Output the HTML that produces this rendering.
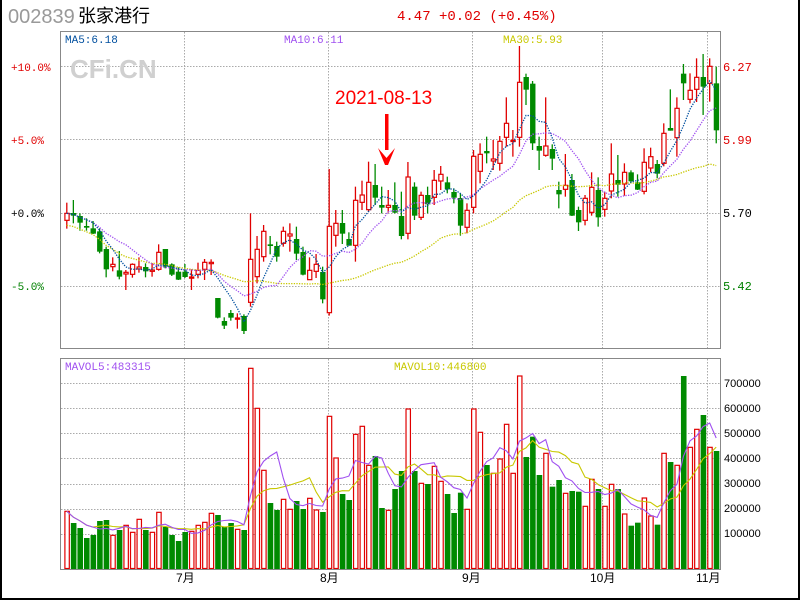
<!DOCTYPE html>
<html><head><meta charset="utf-8"><style>
html,body{margin:0;padding:0;background:#fff;width:800px;height:600px;overflow:hidden}
svg{display:block}
text{font-family:"Liberation Mono","DejaVu Sans Mono",monospace}
text.sans{font-family:"Liberation Sans","Noto Sans CJK SC",sans-serif}
</style></head><body>
<svg id="s" width="800" height="600" xmlns="http://www.w3.org/2000/svg">
<rect x="0" y="0" width="800" height="600" fill="#fff"/>
<rect x="0" y="0" width="2" height="600" fill="#000"/>
<rect x="798" y="0" width="2" height="600" fill="#000"/>
<rect x="0" y="598" width="800" height="2" fill="#000"/>
<text class="sans" x="8" y="23" font-size="20" fill="#999">002839</text>
<text class="sans" x="78" y="22" font-size="18" fill="#000">张家港行</text>
<text x="397" y="20" font-size="14" fill="#e00000">4.47 +0.02 (+0.45%)</text>
<g id="grid" stroke="#aaa" stroke-dasharray="1.5,1.5" stroke-width="1"></g>
<text class="sans" x="70" y="78" font-size="26" font-weight="bold" fill="#d0d0d0">CFi.CN</text>
<g id="g"></g>
<rect x="60.5" y="31.5" width="660" height="317" fill="none" stroke="#888"/>
<rect x="60.5" y="358.5" width="660" height="211" fill="none" stroke="#888"/>
<text x="65" y="43" font-size="11" fill="#004f9f">MA5:6.18</text>
<text x="284" y="43" font-size="11" fill="#a050f0">MA10:6.11</text>
<text x="503" y="43" font-size="11" fill="#c8c800">MA30:5.93</text>
<text x="65" y="370" font-size="11" fill="#a050f0">MAVOL5:483315</text>
<text x="394" y="370" font-size="11" fill="#c8c800">MAVOL10:446800</text>
<text x="11" y="71" font-size="11" fill="#e00000">+10.0%</text>
<text x="11" y="144" font-size="11" fill="#e00000">+5.0%</text>
<text x="11" y="217" font-size="11" fill="#000">+0.0%</text>
<text x="11" y="290" font-size="11" fill="#008000">-5.0%</text>
<text x="723" y="71" font-size="12" fill="#e00000">6.27</text>
<text x="723" y="144" font-size="12" fill="#e00000">5.99</text>
<text x="723" y="217" font-size="12" fill="#000">5.70</text>
<text x="723" y="290" font-size="12" fill="#008000">5.42</text>
<g font-size="11" fill="#000">
<text class="sans" x="724" y="387">700000</text><text class="sans" x="724" y="412">600000</text><text class="sans" x="724" y="437">500000</text>
<text class="sans" x="724" y="462">400000</text><text class="sans" x="724" y="487">300000</text><text class="sans" x="724" y="512">200000</text><text class="sans" x="724" y="537">100000</text>
</g>
<g font-size="12" fill="#000">
<text class="sans" x="176" y="582">7月</text><text class="sans" x="320" y="582">8月</text><text class="sans" x="462" y="582">9月</text><text class="sans" x="590" y="582">10月</text><text class="sans" x="696" y="582">11月</text>
</g>
<text class="sans" x="335" y="104" font-size="19" fill="#ff0000">2021-08-13</text>
<rect x="385" y="114" width="3.5" height="36" fill="#ff0000"/>
<polygon points="378,148 386.5,158 395,148 388,165 385,165" fill="#ff0000"/>
</svg>
<script>
var NS="http://www.w3.org/2000/svg",g=document.getElementById('g'),gr=document.getElementById('grid');
function el(p,t,a){var e=document.createElementNS(NS,t);for(var k in a)e.setAttribute(k,a[k]);p.appendChild(e);return e;}
[184.5,328.5,472.5,602.5,707.5].forEach(function(x){el(gr,'line',{x1:x,y1:32,x2:x,y2:348});el(gr,'line',{x1:x,y1:359,x2:x,y2:569});});
[66.5,139.5,213.5,286.5].forEach(function(y){el(gr,'line',{x1:61,y1:y,x2:720,y2:y});});
[383.5,408.5,433.5,458.5,484.5,509.5,534.5].forEach(function(y){el(gr,'line',{x1:61,y1:y,x2:720,y2:y});});
var A=[['R',190,211,158,236],['G',189,197,150,220],['G',198,218,190,242],['G',228,233,205,242],['G',235,251,213,252],['G',244,305,235,310],['G',297,358,290,382],['R',343,350,322,364],['G',361,380,303,388],['R',367,372,360,420],
['R',343,373,340,383],['R',351,357,322,368],['G',351,364,340,382],['R',360,364,339,380],['R',307,358,283,362],['G',297,350,297,355],['G',343,374,340,378],['G',365,389,352,390],['G',365,381,342,384],['R',381,383,358,420],
['R',361,373,338,385],['R',337,358,327,390],['R',337,341,328,375],['G',444,503,444,505],['G',513,527,502,537],['G',489,503,480,512],['R',504,506,490,536],['G',498,543,493,552],['R',328,457,190,470],['R',298,380,258,400],
['R',244,320,225,335],['G',283,288,258,313],['G',288,320,275,335],['R',244,280,230,290],['R',252,258,220,305],['G',267,311,230,330],['G',306,374,290,376],['R',361,389,322,390],['R',343,364,312,384],['G',366,448,350,460],
['R',229,488,57,497],['R',220,256,180,290],['G',219,251,180,282],['G',267,287,247,287],['R',151,286,110,335],['R',135,157,92,180],['R',97,179,35,186],['G',105,143,42,165],['G',165,173,110,190],['R',166,172,120,188]];
var B=[['G',495,518,427,520],['G',528,588,455,598],['R',411,580,366,598],['G',440,527,427,540],['R',466,532,455,540],['G',465,493,440,520],['R',421,472,390,495],['R',403,423,378,450],['G',427,448,410,460],['G',456,473,445,490],
['G',474,557,460,587],['R',511,562,490,580],['R',349,502,330,520],['R',343,394,310,430],['G',333,340,290,370],['R',357,363,300,390],['R',304,370,288,392],['R',250,292,172,320],['R',301,303,270,350],['R',127,292,18,320],
['G',111,149,101,195],['G',131,310,123,330],['G',318,332,290,390],['R',318,346,172,350],['G',327,356,313,390],['G',450,463,425,505],['R',436,448,342,470],['G',420,527,402,528],['G',510,547,500,573],['R',475,541,465,556],
['R',442,517,397,527],['G',450,532,412,560],['R',475,508,455,530],['R',402,453,310,475],['G',420,434,345,470],['R',397,432,370,467],['G',397,424,391,430],['G',427,449,403,450],['R',367,454,325,463],['R',350,384,323,397],
['G',372,401,360,415],['R',280,370,250,379],['G',264,272,148,272],['R',205,293,172,350],['G',101,130,72,180],['R',151,178,100,190],['R',112,148,55,186],['G',111,140,42,225],['R',79,130,55,185],['G',130,271,80,310]];
var C=[];A.forEach(function(c){C.push([c[0],150+c[1]/3,150+c[2]/3,150+c[3]/3,150+c[4]/3]);});
B.forEach(function(c){C.push([c[0],40+c[1]/3,40+c[2]/3,40+c[3]/3,40+c[4]/3]);});
var V=[514,549,564,594,585,543,540,586,570,556,577,538,570,577,517,561,585,603,576,574,556,547,520,525,560,549,568,570,85,205,391,489,510,478,508,483,507,475,510,516,229,354,462,480,283,259,376,348,504,511,447,393,
207,393,430,432,379,424,462,519,458,508,207,277,375,400,357,253,400,108,351,290,405,340,440,420,460,453,455,499,418,447,499,433,447,522,557,548,474,528,554,340,366,376,108,322,268,225,322,333];
var RED="#e00000",GRN="#008a00";
function X(i){return 64.3+i*6.56;}
var closes=[],vols=[];
C.forEach(function(c,i){var x=X(i),cx=x+2.5,r=c[0]=='R',col=r?RED:GRN;
 el(g,'line',{x1:cx,y1:c[3],x2:cx,y2:c[4],stroke:col,'stroke-width':1.3});
 var h=Math.max(c[2]-c[1],1.2);
 if(r)el(g,'rect',{x:x+0.6,y:c[1],width:4.2,height:h,fill:'#fff',stroke:col,'stroke-width':1.2});
 else el(g,'rect',{x:x,y:c[1],width:5.4,height:h,fill:col});
 closes.push(r?c[1]:c[2]);
 var vt=340+V[i]/3,vh=568.5-vt;
 if(r)el(g,'rect',{x:x+0.6,y:vt,width:4.4,height:vh,fill:'#fff',stroke:col,'stroke-width':1.2});
 else el(g,'rect',{x:x,y:vt,width:5.6,height:vh+0.5,fill:col});
 vols.push(vt);
});
function ma(arr,n,off){var p=[];for(var i=0;i<arr.length;i++){var s=0,k=0;for(var j=Math.max(0,i-n+1);j<=i;j++){s+=arr[j];k++;}p.push((X(i)+2.5).toFixed(1)+','+(s/k+(off||0)).toFixed(1));}return p.join(' ');}
el(g,'polyline',{points:ma(closes,30,12),fill:'none',stroke:'#c8c800','stroke-width':1.3,'stroke-dasharray':'1.3,1.3'});
el(g,'polyline',{points:ma(closes,10),fill:'none',stroke:'#a050f0','stroke-width':1.3,'stroke-dasharray':'1.3,1.3'});
el(g,'polyline',{points:ma(closes,5),fill:'none',stroke:'#004f9f','stroke-width':1.3,'stroke-dasharray':'1.3,1.3'});
el(g,'polyline',{points:ma(vols,10),fill:'none',stroke:'#c8c800','stroke-width':1.1});
el(g,'polyline',{points:ma(vols,5),fill:'none',stroke:'#a050f0','stroke-width':1.1});
</script>
</body></html>
